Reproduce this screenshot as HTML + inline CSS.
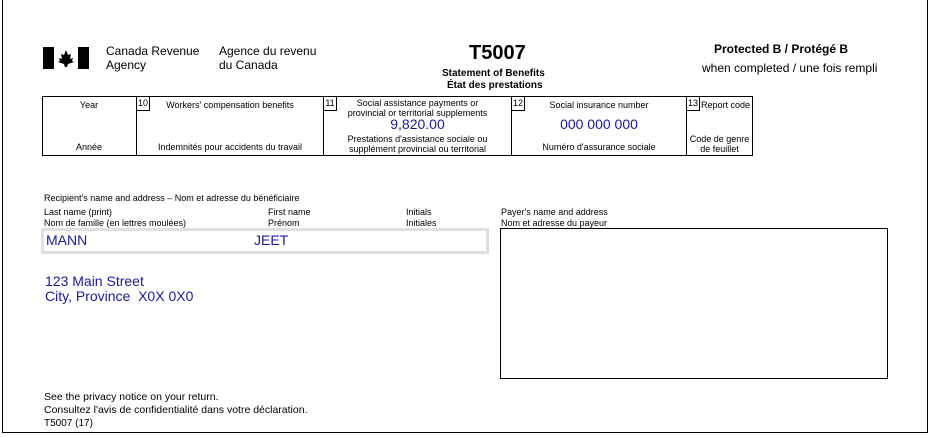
<!DOCTYPE html>
<html><head><meta charset="utf-8"><style>
body{margin:0;width:931px;height:437px;background:#fff;font-family:"Liberation Sans",Arial,sans-serif;color:#000;position:relative;overflow:hidden}
.a{position:absolute;white-space:nowrap}
.s{font-size:9px}
.blue{color:#1a1a9c}
.cell{position:absolute;top:96px;height:59px;border-left:1px solid #000;box-sizing:border-box}
.num{position:absolute;left:0;top:0;width:12px;height:14px;border-right:1px solid #000;border-bottom:1px solid #000;font-size:9px;line-height:14px;text-align:center}
.c{position:absolute;left:0;right:0;text-align:center;font-size:9px;line-height:10px}
</style></head><body>
<div class="a" style="left:2px;top:0;width:926px;height:433px;border:1px solid #000;border-top:none;box-sizing:border-box"></div>
<svg class="a" style="left:43px;top:47px" width="46" height="22" viewBox="0 0 46 22">
<rect x="0" y="0" width="11" height="22" fill="#000"/><rect x="35" y="0" width="11" height="22" fill="#000"/>
<path d="M23 3 L21 8 L18 7 L19 12 L16 11 L17 14 L15 15 L21 17 L22 20 L24 20 L25 17 L31 15 L29 14 L30 11 L27 12 L28 7 L25 8 Z" fill="#000"/>
</svg>
<div class="a" style="left:106px;top:44px;font-size:12px;line-height:14px">Canada Revenue<br>Agency</div>
<div class="a" style="left:219px;top:44px;font-size:12px;line-height:14px">Agence du revenu<br>du Canada</div>
<div class="a" style="left:469px;top:42px;font-size:20px;font-weight:bold">T5007</div>
<div class="a" style="left:442px;top:68px;font-size:10px;font-weight:bold;line-height:12px;text-align:center">Statement of Benefits<br>&nbsp;État des prestations</div>
<div class="a" style="left:714px;top:42px;font-size:12px;font-weight:bold">Protected B / Protégé B</div>
<div class="a" style="left:702px;top:61px;font-size:12px">when completed / une fois rempli</div>
<div class="a" style="left:42px;top:96px;width:711px;height:60px;border:1px solid #000;box-sizing:border-box"></div>
<div class="cell" style="left:42px;width:94px;border-left:none"><div class="c" style="top:4px">Year</div><div class="c" style="top:46px">Année</div></div>
<div class="cell" style="left:136px;width:187px"><div class="num">10</div><div class="c" style="top:4px">Workers' compensation benefits</div><div class="c" style="top:46px">Indemnités pour accidents du travail</div></div>
<div class="cell" style="left:323px;width:188px"><div class="num">11</div><div class="c" style="top:2px">Social assistance payments or<br>provincial or territorial supplements</div><div class="c blue" style="top:21px;font-size:14px;line-height:14px">9,820.00</div><div class="c" style="top:38px">Prestations d'assistance sociale ou<br>supplément provincial ou territorial</div></div>
<div class="cell" style="left:511px;width:175px"><div class="num">12</div><div class="c" style="top:4px">Social insurance number</div><div class="c blue" style="top:21px;font-size:14px;line-height:14px">000 000 000</div><div class="c" style="top:46px">Numéro d'assurance sociale</div></div>
<div class="cell" style="left:686px;width:66px"><div class="num">13</div><div class="c" style="top:4px;left:12px">Report code</div><div class="c" style="top:38px">Code de genre<br>de feuillet</div></div>
<div class="a s" style="left:44px;top:193px">Recipient's name and address – Nom et adresse du bénéficiaire</div>
<div class="a s" style="left:44px;top:207px;line-height:11px">Last name (print)<br>Nom de famille (en lettres moulées)</div>
<div class="a s" style="left:268px;top:207px;line-height:11px">First name<br>Prénom</div>
<div class="a s" style="left:406px;top:207px;line-height:11px">Initials<br>Initiales</div>
<div class="a" style="left:41px;top:228px;width:448px;height:26px;border:3px solid #e0e0e0;box-sizing:border-box"></div>
<div class="a blue" style="left:46px;top:232px;font-size:14px">MANN</div>
<div class="a blue" style="left:254px;top:232px;font-size:14px">JEET</div>
<div class="a blue" style="left:45px;top:274px;font-size:14px;line-height:15px">123 Main Street<br>City, Province&nbsp; X0X 0X0</div>
<div class="a s" style="left:501px;top:207px;line-height:11px">Payer's name and address<br>Nom et adresse du payeur</div>
<div class="a" style="left:500px;top:228px;width:388px;height:151px;border:1px solid #000;box-sizing:border-box"></div>
<div class="a" style="left:44px;top:391px;font-size:10.5px;line-height:13px">See the privacy notice on your return.<br>Consultez l'avis de confidentialité dans votre déclaration.</div>
<div class="a" style="left:44px;top:418px;font-size:10px">T5007 (17)</div>
</body></html>
